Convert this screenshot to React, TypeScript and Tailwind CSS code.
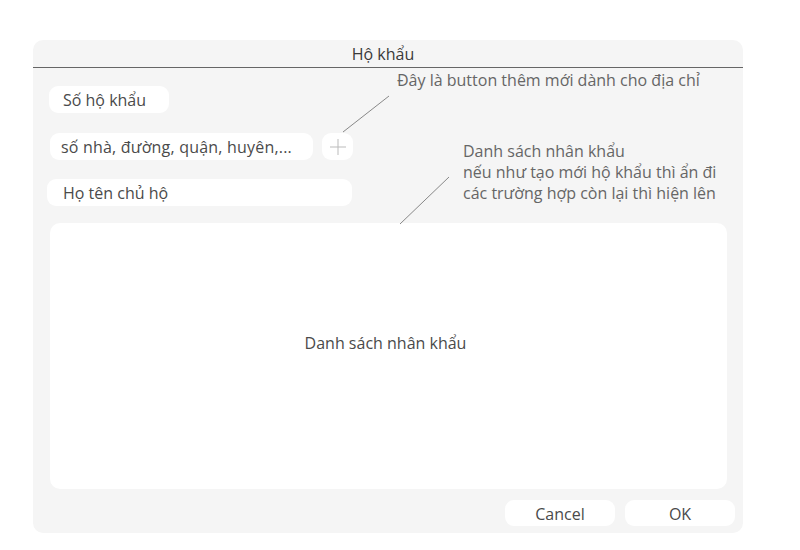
import React from "react";

const font = { fontFamily: '"Open Sans", "Noto Sans", sans-serif' };

const Field = ({ text, className }: { text: string; className: string }) => (
  <div className={`bg-white rounded-[9px] h-[27px] flex items-center text-[16px] text-[#4a4a4a] ${className}`}>
    {text}
  </div>
);

const App = () => {
  return (
    <div className="w-full h-[550px] bg-white pt-[40px] pl-[33px]" style={font}>
      <div className="relative w-[710px] h-[493px] bg-[#f5f5f5] rounded-[10px] flex flex-col">
        <div className="h-[28px] border-b border-[#666] flex items-center justify-center text-[16px] text-[#3a3a3a] pt-[1px] pr-[10px]">
          Hộ khẩu
        </div>

        <Field text="Số hộ khẩu" className="mt-[18px] ml-[16px] w-[120px] h-[26px] pl-[14px]" />

        <div className="flex mt-[20px] ml-[17px] gap-[9px]">
          <Field text="số nhà, đường, quận, huyên,..." className="w-[263px] pl-[11px] tracking-[0.2px]" />
          <div className="w-[31px] h-[27px] bg-white rounded-[9px] flex items-center justify-center">
            <svg width="18" height="18" viewBox="0 0 18 18">
              <path d="M9 1v16M1 9h16" stroke="#bbb" strokeWidth="1" />
            </svg>
          </div>
        </div>

        <Field text="Họ tên chủ hộ" className="mt-[19px] ml-[14px] w-[305px] pl-[16px]" />

        <div className="mt-[17px] ml-[17px] w-[677px] h-[266px] bg-white rounded-[10px] flex items-center justify-center text-[16px] text-[#4a4a4a] pb-[26px] pr-[6px]">
          Danh sách nhân khẩu
        </div>

        <div className="flex justify-end gap-[10px] mt-[11px] mr-[8px]">
          <button className="w-[110px] h-[26px] bg-white rounded-[9px] text-[16px] text-[#4a4a4a] pt-[1px]">Cancel</button>
          <button className="w-[110px] h-[26px] bg-white rounded-[9px] text-[16px] text-[#4a4a4a] pt-[2px]">OK</button>
        </div>

        {/* annotations */}
        <svg className="absolute left-0 top-0 pointer-events-none" width="710" height="493">
          <line x1="310" y1="92" x2="356" y2="56" stroke="#888" strokeWidth="1" />
          <line x1="367" y1="184" x2="416" y2="137" stroke="#888" strokeWidth="1" />
        </svg>
        <div className="absolute left-[364px] top-[30px] text-[16px] text-[#666] leading-[21px]">
          Đây là button thêm mới dành cho địa chỉ
        </div>
        <div className="absolute left-[430px] top-[101px] text-[16px] text-[#666] leading-[21px]">
          <div>Danh sách nhân khẩu</div>
          <div>nếu như tạo mới hộ khẩu thì ẩn đi</div>
          <div>các trường hợp còn lại thì hiện lên</div>
        </div>
      </div>
    </div>
  );
};

export default App;
